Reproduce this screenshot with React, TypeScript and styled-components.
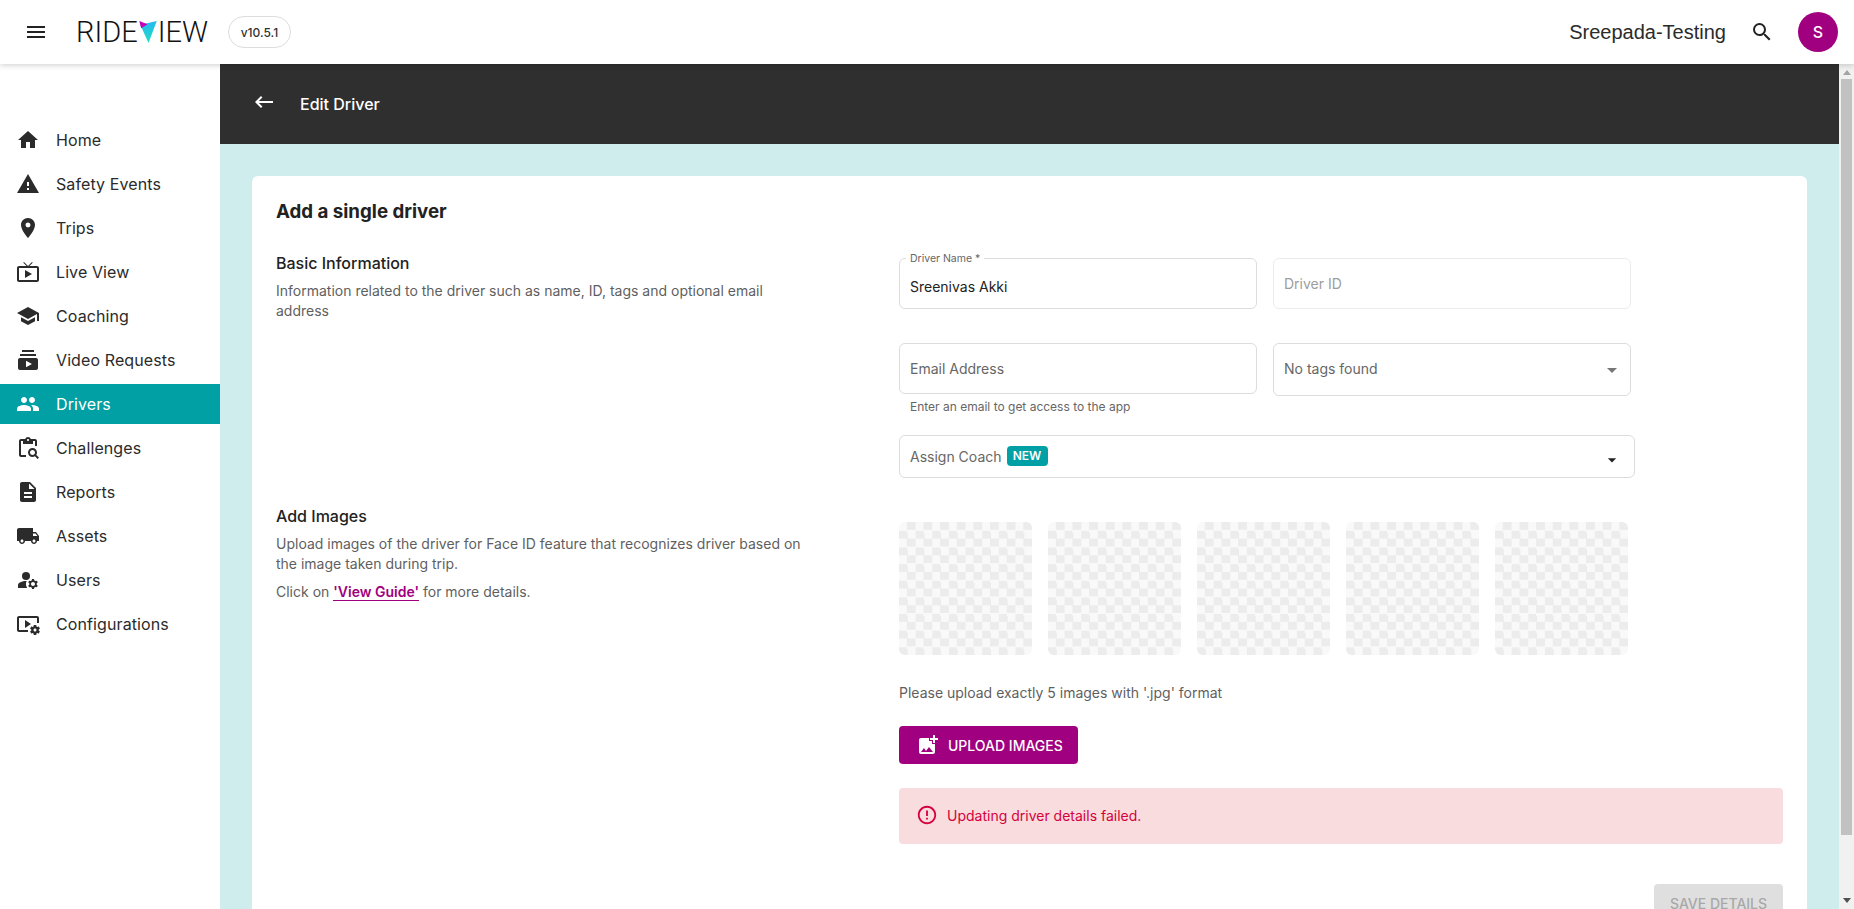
import React from "react";
import styled, { createGlobalStyle } from "styled-components";
import {
  MdAddPhotoAlternate,
  MdArrowDropDown,
  MdDescription,
  MdErrorOutline,
  MdHome,
  MdKeyboardBackspace,
  MdLocalShipping,
  MdLocationOn,
  MdManageAccounts,
  MdMenu,
  MdOutlineContentPasteSearch,
  MdOutlineLiveTv,
  MdOutlineVideoSettings,
  MdPeople,
  MdSchool,
  MdSearch,
  MdSubscriptions,
  MdWarning,
} from "react-icons/md";

const PURPLE = "#a0007f";
const TEAL = "#00a0a4";

const navItems = [
  { label: "Home", icon: MdHome },
  { label: "Safety Events", icon: MdWarning },
  { label: "Trips", icon: MdLocationOn },
  { label: "Live View", icon: MdOutlineLiveTv },
  { label: "Coaching", icon: MdSchool },
  { label: "Video Requests", icon: MdSubscriptions },
  { label: "Drivers", icon: MdPeople, active: true },
  { label: "Challenges", icon: MdOutlineContentPasteSearch },
  { label: "Reports", icon: MdDescription },
  { label: "Assets", icon: MdLocalShipping },
  { label: "Users", icon: MdManageAccounts },
  { label: "Configurations", icon: MdOutlineVideoSettings },
];

export default function App() {
  return (
    <Page>
      <GlobalStyle />
      <Header>
        <MenuButton>
          <MdMenu size={24} />
        </MenuButton>
        <Logo>
          RIDE
          <LogoMark viewBox="0 0 20 24">
            <defs>
              <linearGradient id="logoFill" x1="0" y1="0" x2="0" y2="1">
                <stop offset="0" stopColor="#27b7f0" />
                <stop offset="1" stopColor="#1fe0c4" />
              </linearGradient>
            </defs>
            <path d="M1 4 L19 0 L10 24 Z" fill="url(#logoFill)" />
            <path d="M0 0 L9 3.5 L2 8 Z" fill="#c400b8" />
          </LogoMark>
          IEW
        </Logo>
        <VersionChip>v10.5.1</VersionChip>
        <HeaderRight>
          <OrgName>Sreepada-Testing</OrgName>
          <SearchIcon>
            <MdSearch size={24} />
          </SearchIcon>
          <Avatar>S</Avatar>
        </HeaderRight>
      </Header>
      <Body>
        <Sidebar>
          {navItems.map((item) => (
            <NavItem key={item.label} $active={item.active}>
              <item.icon size={24} />
              <span>{item.label}</span>
            </NavItem>
          ))}
        </Sidebar>
        <Main>
          <TitleBar>
            <MdKeyboardBackspace size={24} />
            <PageTitle>Edit Driver</PageTitle>
          </TitleBar>
          <Card>
            <CardTitle>Add a single driver</CardTitle>
            <FormGrid>
              <SideText>
                <SectionTitle>Basic Information</SectionTitle>
                <SectionText>
                  Information related to the driver such as name, ID, tags and
                  optional email address
                </SectionText>
              </SideText>
              <div>
                <FieldRow>
                  <Field>
                    <FloatLabel>Driver Name *</FloatLabel>
                    <FieldValue>Sreenivas Akki</FieldValue>
                  </Field>
                  <Field $disabled>
                    <Placeholder $disabled>Driver ID</Placeholder>
                  </Field>
                </FieldRow>
                <FieldRow $top={34}>
                  <div>
                    <Field>
                      <Placeholder>Email Address</Placeholder>
                    </Field>
                    <Helper>Enter an email to get access to the app</Helper>
                  </div>
                  <Field $tall>
                    <Placeholder>No tags found</Placeholder>
                    <TagsArrow>
                      <MdArrowDropDown size={24} />
                    </TagsArrow>
                  </Field>
                </FieldRow>
                <CoachSelect>
                  <Placeholder>Assign Coach</Placeholder>
                  <NewBadge>NEW</NewBadge>
                  <CoachArrow>
                    <MdArrowDropDown size={20} />
                  </CoachArrow>
                </CoachSelect>
              </div>
            </FormGrid>
            <FormGrid>
              <SideText $images>
                <SectionTitle>Add Images</SectionTitle>
                <SectionText>
                  Upload images of the driver for Face ID feature that
                  recognizes driver based on the image taken during trip.
                </SectionText>
                <ClickText>
                  Click on <GuideLink>'View Guide'</GuideLink> for more details.
                </ClickText>
              </SideText>
              <div>
                <Thumbs>
                  {[1, 2, 3, 4, 5].map((n) => (
                    <Thumb key={n} />
                  ))}
                </Thumbs>
                <UploadHint>
                  Please upload exactly 5 images with '.jpg' format
                </UploadHint>
                <UploadButton>
                  <MdAddPhotoAlternate size={24} />
                  UPLOAD IMAGES
                </UploadButton>
                <Alert>
                  <MdErrorOutline size={22} />
                  Updating driver details failed.
                </Alert>
                <SaveRow>
                  <SaveButton>SAVE DETAILS</SaveButton>
                </SaveRow>
              </div>
            </FormGrid>
          </Card>
        </Main>
        <Scrollbar>
          <ArrowUp />
          <ScrollThumb />
          <ScrollTrack />
          <ArrowDown />
        </Scrollbar>
      </Body>
    </Page>
  );
}

const GlobalStyle = createGlobalStyle`
  html, body {
    margin: 0;
    height: 100%;
    overflow: hidden;
    font-family: "Inter", "Noto Sans", sans-serif;
    background: #fff;
  }
`;

const Page = styled.div`
  display: flex;
  flex-direction: column;
  height: 909px;
  overflow: hidden;
`;

const Header = styled.header`
  position: relative;
  z-index: 2;
  flex: none;
  display: flex;
  align-items: center;
  height: 64px;
  padding: 0 16px 0 24px;
  box-sizing: border-box;
  background: #fff;
  box-shadow: 0 1px 6px rgba(0, 0, 0, 0.2);
`;

const MenuButton = styled.div`
  display: flex;
  color: #222;
  margin-right: 28px;
`;

const Logo = styled.div`
  display: flex;
  align-items: center;
  font-family: "Roboto", sans-serif;
  font-weight: 300;
  font-size: 29px;
  line-height: 30px;
  color: #111;
`;

const LogoMark = styled.svg`
  width: 19px;
  height: 22px;
  margin: 0 0 1px 1px;
`;

const VersionChip = styled.div`
  margin-left: 20px;
  width: 63px;
  height: 32px;
  display: flex;
  align-items: center;
  justify-content: center;
  box-sizing: border-box;
  border: 1px solid #ddd;
  border-radius: 16px;
  font-size: 12px;
  font-weight: 500;
  color: #333;
`;

const HeaderRight = styled.div`
  margin-left: auto;
  display: flex;
  align-items: center;
`;

const OrgName = styled.div`
  font-family: "Liberation Sans", Arial, sans-serif;
  font-size: 20px;
  color: #2b2b2b;
`;

const SearchIcon = styled.div`
  display: flex;
  margin: 0 24px 0 24px;
  color: #222;
`;

const Avatar = styled.div`
  width: 40px;
  height: 40px;
  border-radius: 50%;
  background: ${PURPLE};
  color: #fff;
  display: flex;
  align-items: center;
  justify-content: center;
  font-size: 16px;
  font-weight: 500;
`;

const Body = styled.div`
  flex: 1;
  min-height: 0;
  display: flex;
`;

const Sidebar = styled.nav`
  flex: none;
  width: 220px;
  padding-top: 56px;
  box-sizing: border-box;
  display: flex;
  flex-direction: column;
  gap: 4px;
  background: #fff;
`;

const NavItem = styled.div<{ $active?: boolean }>`
  display: flex;
  align-items: center;
  gap: 16px;
  height: 40px;
  padding-left: 16px;
  font-size: 16px;
  letter-spacing: 0.1px;
  color: ${({ $active }) => ($active ? "#fff" : "#2b2b2b")};
  background: ${({ $active }) => ($active ? TEAL : "transparent")};
`;

const Main = styled.main`
  flex: 1;
  min-width: 0;
  overflow: hidden;
  background: #cfeded;
`;

const TitleBar = styled.div`
  display: flex;
  align-items: center;
  height: 80px;
  padding-left: 32px;
  gap: 24px;
  background: #2f2f2f;
  color: #fff;
  svg {
    margin-top: -4px;
  }
`;

const PageTitle = styled.div`
  font-size: 16px;
  font-weight: 500;
`;

const Card = styled.section`
  margin: 32px 32px 0 32px;
  padding: 25px 24px 24px 24px;
  background: #fff;
  border-radius: 6px;
`;

const CardTitle = styled.h2`
  margin: 0 0 24px;
  font-size: 18.72px;
  font-weight: 700;
  line-height: 22px;
  color: #222;
`;

const FormGrid = styled.div`
  display: grid;
  grid-template-columns: 623px 1fr;
`;

const SideText = styled.div<{ $images?: boolean }>`
  width: 530px;
  padding-top: ${({ $images }) => ($images ? "28px" : "6px")};
`;

const SectionTitle = styled.div`
  font-size: 16px;
  font-weight: 500;
  line-height: 20px;
  color: #222;
`;

const SectionText = styled.div`
  margin-top: 8px;
  font-size: 14px;
  line-height: 20px;
  color: #5f5f5f;
`;

const ClickText = styled(SectionText)`
  margin-top: 8px;
`;

const GuideLink = styled.span`
  font-weight: 600;
  color: ${PURPLE};
  border-bottom: 1px solid ${PURPLE};
`;

const FieldRow = styled.div<{ $top?: number }>`
  display: grid;
  grid-template-columns: 358px 358px;
  gap: 16px;
  align-items: start;
  margin-top: ${({ $top }) => $top ?? 11}px;
`;

const Field = styled.div<{ $disabled?: boolean; $tall?: boolean }>`
  position: relative;
  display: flex;
  align-items: center;
  height: ${({ $tall }) => ($tall ? "53px" : "51px")};
  padding-left: 10px;
  padding-bottom: ${({ $tall }) => ($tall ? "2px" : "0")};
  box-sizing: border-box;
  border: 1px solid ${({ $disabled }) => ($disabled ? "#ececec" : "#dcdcdc")};
  border-radius: 6px;
  font-size: 14px;
  background: #fff;
`;

const FloatLabel = styled.span`
  position: absolute;
  top: -6px;
  left: 6px;
  padding: 0 4px;
  font-size: 10.5px;
  line-height: 12px;
  color: #666;
  background: #fff;
`;

const FieldValue = styled.span`
  margin-top: 5px;
  color: #222;
`;

const Placeholder = styled.span<{ $disabled?: boolean }>`
  font-size: 14px;
  color: ${({ $disabled }) => ($disabled ? "#9d9d9d" : "#666")};
`;

const TagsArrow = styled.span`
  position: absolute;
  right: 6px;
  top: 14px;
  display: flex;
  color: #777;
`;

const CoachArrow = styled.span`
  position: absolute;
  right: 12px;
  top: 14px;
  display: flex;
  color: #222;
`;

const Helper = styled.div`
  margin-top: 5px;
  padding-left: 11px;
  font-size: 12px;
  line-height: 16px;
  color: #666;
`;

const CoachSelect = styled.div`
  position: relative;
  display: flex;
  align-items: center;
  gap: 5px;
  width: 736px;
  height: 43px;
  margin-top: 20px;
  padding-left: 10px;
  box-sizing: border-box;
  border: 1px solid #dcdcdc;
  border-radius: 6px;
`;

const NewBadge = styled.span`
  display: flex;
  align-items: center;
  justify-content: center;
  width: 41px;
  height: 20px;
  border-radius: 4px;
  background: ${TEAL};
  color: #fff;
  font-size: 12px;
  font-weight: 600;
  margin-top: -2px;
`;

const Thumbs = styled.div`
  display: flex;
  gap: 16px;
  margin-top: 44px;
`;

const Thumb = styled.div`
  width: 133px;
  height: 133px;
  border-radius: 6px;
  background-color: #f9f9f9;
  background-image: conic-gradient(
    #ececec 25%,
    transparent 0 50%,
    #ececec 0 75%,
    transparent 0
  );
  background-size: 16.65px 16.65px;
`;

const UploadHint = styled.div`
  margin-top: 28px;
  font-size: 14px;
  line-height: 20px;
  color: #5f5f5f;
`;

const UploadButton = styled.button`
  display: flex;
  align-items: center;
  gap: 8px;
  height: 38px;
  width: 179px;
  margin-top: 23px;
  padding: 0 0 0 17px;
  border: 0;
  border-radius: 4px;
  background: ${PURPLE};
  color: #fff;
  font-family: inherit;
  font-size: 14px;
  font-weight: 500;
`;

const Alert = styled.div`
  display: flex;
  align-items: center;
  gap: 9px;
  height: 56px;
  margin-top: 24px;
  padding-left: 17px;
  padding-bottom: 2px;
  box-sizing: border-box;
  border-radius: 4px;
  background: #f8dcde;
  color: #d6003c;
  font-size: 14px;
  font-weight: 400;
`;

const SaveRow = styled.div`
  display: flex;
  justify-content: flex-end;
  margin-top: 40px;
`;

const SaveButton = styled.button`
  width: 129px;
  height: 38px;
  border: 0;
  border-radius: 4px;
  background: #dfdfdf;
  color: #a8a8a8;
  font-family: inherit;
  font-size: 14px;
  font-weight: 500;
`;

const Scrollbar = styled.div`
  flex: none;
  width: 15px;
  display: flex;
  flex-direction: column;
  align-items: center;
  background: #f1f1f1;
`;

const ArrowUp = styled.div`
  flex: none;
  width: 0;
  height: 0;
  margin: 6px 0 4px;
  border-left: 4px solid transparent;
  border-right: 4px solid transparent;
  border-bottom: 5px solid #a3a3a3;
`;

const ScrollThumb = styled.div`
  flex: none;
  width: 11px;
  height: 756px;
  background: #c1c1c1;
`;

const ScrollTrack = styled.div`
  flex: 1;
`;

const ArrowDown = styled.div`
  flex: none;
  width: 0;
  height: 0;
  margin: 0 0 6px;
  border-left: 4px solid transparent;
  border-right: 4px solid transparent;
  border-top: 5px solid #505050;
`;
